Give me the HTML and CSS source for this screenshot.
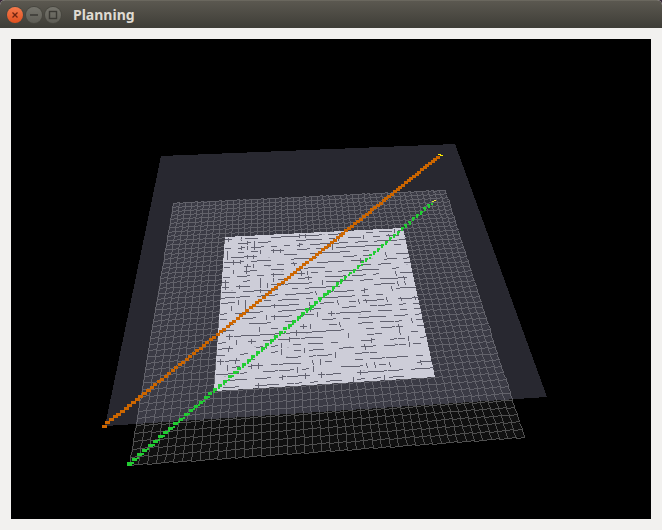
FILE: index.html
```html
<!DOCTYPE html>
<html lang="en">
<head>
<meta charset="utf-8">
<title>Planning</title>
<link rel="stylesheet" href="styles.css">
</head>
<body>
<div class="window">
  <header class="titlebar">
    <div class="controls">
      <span class="btn btn-close">
        <svg viewBox="0 0 10 10" width="10" height="10"><path d="M2.5 2.5 7.5 7.5M7.5 2.5 2.5 7.5" stroke="#6e2410" stroke-width="1.3" fill="none"/></svg>
      </span>
      <span class="btn">
        <svg viewBox="0 0 10 10" width="10" height="10"><path d="M1 5H9" stroke="#3a3934" stroke-width="1.5" fill="none"/></svg>
      </span>
      <span class="btn">
        <svg viewBox="0 0 10 10" width="10" height="10"><rect x="1.5" y="1.5" width="7" height="7" stroke="#3a3934" stroke-width="1.4" fill="none"/></svg>
      </span>
    </div>
    <h1 class="title">Planning</h1>
  </header>
  <main class="content">
    <canvas id="scene" class="scene" width="640" height="480"></canvas>
  </main>
</div>
<script src="app.js"></script>
</body>
</html>
```
FILE: styles.css
```css
* { box-sizing: border-box; }
html, body { margin: 0; height: 100%; background: #3a2a3a; }
.window {
  width: 662px;
  height: 530px;
  display: flex;
  flex-direction: column;
  background: #f2f1ef;
  border-radius: 5px 5px 0 0;
  overflow: hidden;
}
.titlebar {
  height: 28px;
  flex: none;
  display: flex;
  align-items: center;
  padding-left: 7px;
  background: linear-gradient(#5b5850, #3e3d37);
  border-top: 1px solid #6a675e;
}
.controls { display: flex; gap: 3px; align-items: center; }
.btn {
  width: 16px;
  height: 16px;
  border-radius: 50%;
  display: flex;
  align-items: center;
  justify-content: center;
  background: linear-gradient(#75746c, #5e5d56);
  box-shadow: 0 0 0 1px #47463f;
}
.btn-close { background: linear-gradient(#f47a4c, #e0501f); }
.title {
  margin: 0 0 0 12px;
  font: 700 14px/1 "Noto Sans", "Open Sans", sans-serif;
  color: #dfdbd2;
}
.content { flex: 1; padding: 11px; }
.scene { display: block; width: 640px; height: 480px; background: #000; }
```
FILE: app.js
```js
(function () {
  var ctx = document.getElementById('scene').getContext('2d');
  var OX = 11, OY = 39;
  var seed = 12345;
  function rnd() { seed = (seed * 1664525 + 1013904223) >>> 0; return seed / 4294967296; }
  function px(x, y, c, w, h) { ctx.fillStyle = c; ctx.fillRect(x - OX, y - OY, w || 1, h || 1); }

  function inside(q, x, y) {
    var pos = 0, neg = 0;
    for (var i = 0; i < 4; i++) {
      var a = q[i], b = q[(i + 1) % 4];
      var s = (b[0] - a[0]) * (y - a[1]) - (b[1] - a[1]) * (x - a[0]);
      if (s > 0) pos++; else if (s < 0) neg++;
    }
    return !(pos && neg);
  }
  function fill(q, colorAt) {
    for (var y = 39; y < 519; y++) for (var x = 11; x < 651; x++) {
      if (inside(q, x + 0.5, y + 0.5)) { var c = colorAt(x, y); if (c) px(x, y, c); }
    }
  }
  function line(x0, y0, x1, y1, colorAt) {
    x0 = Math.round(x0); y0 = Math.round(y0); x1 = Math.round(x1); y1 = Math.round(y1);
    var dx = Math.abs(x1 - x0), dy = Math.abs(y1 - y0), sx = x0 < x1 ? 1 : -1, sy = y0 < y1 ? 1 : -1, e = dx - dy;
    for (;;) {
      px(x0, y0, colorAt(x0, y0));
      if (x0 === x1 && y0 === y1) break;
      var e2 = 2 * e;
      if (e2 > -dy) { e -= dy; x0 += sx; }
      if (e2 < dx) { e += dx; y0 += sy; }
    }
  }
  function homography(q) {
    var x0 = q[0][0], y0 = q[0][1], x1 = q[1][0], y1 = q[1][1], x2 = q[2][0], y2 = q[2][1], x3 = q[3][0], y3 = q[3][1];
    var dx1 = x1 - x2, dx2 = x3 - x2, sx = x0 - x1 + x2 - x3;
    var dy1 = y1 - y2, dy2 = y3 - y2, sy = y0 - y1 + y2 - y3;
    var d = dx1 * dy2 - dx2 * dy1;
    var g = (sx * dy2 - dx2 * sy) / d, h = (dx1 * sy - sx * dy1) / d;
    var a = x1 - x0 + g * x1, b = x3 - x0 + h * x3, e = y1 - y0 + g * y1, f = y3 - y0 + h * y3;
    return function (u, v) {
      var w = g * u + h * v + 1;
      return [(a * u + b * v + x0) / w, (e * u + f * v + y0) / w];
    };
  }

  var plane = [[161, 156], [455, 144], [547, 397], [105, 426]];
  var grid = [[173, 203], [445, 190], [524, 437], [129, 465]];
  var inner = [[225, 237], [403, 228], [435, 377], [214, 391]];

  fill(plane, function () { return '#282830'; });
  fill(grid, function (x, y) { return inside(plane, x + 0.5, y + 0.5) ? '#3b3b45' : '#101010'; });

  var gridLine = function (x, y) { return inside(plane, x + 0.5, y + 0.5) ? '#63636b' : '#505050'; };
  var G = homography(grid), N = 46, i, j, a, b;
  for (i = 0; i <= N; i++) for (j = 0; j < N; j++) {
    a = G(i / N, j / N); b = G(i / N, (j + 1) / N);
    line(a[0], a[1] + 1, b[0], b[1] - 1, gridLine);
    a = G(j / N, i / N); b = G((j + 1) / N, i / N);
    line(a[0], a[1], b[0], b[1] - 0.4, gridLine);
  }

  fill(inner, function () { return '#cdcdd8'; });
  var I = homography(inner), M = 28;
  var wall = function () { return '#626270'; };
  for (i = 0; i < M; i++) for (j = 0; j < M; j++) {
    var u = i / M, v = j / M;
    var gx = Math.max(0, 0.3 - u * 0.6 - v * 0.2) + 0.1;
    if (rnd() < 0.56) {
      a = I(u + 0.1 / M, v + 0.5 / M); b = I(u + 0.95 / M, v + 0.5 / M);
      line(a[0], a[1], b[0], b[1], wall);
    }
    if (rnd() < gx) {
      a = I(u + 0.5 / M, v + 0.2 / M); b = I(u + 0.5 / M, v + 0.9 / M);
      line(a[0], a[1], b[0], b[1], wall);
    }
    if (rnd() < 0.03) {
      a = I(u + rnd() / M, v + rnd() / M);
      px(Math.round(a[0]), Math.round(a[1]), '#b0b0bc', 2, 1);
    }
  }

  function path(x0, y0, x1, y1, color, step, big, small, gapDots) {
    var len = Math.hypot(x1 - x0, y1 - y0), s = 0;
    while (s < len) {
      var t = s / len, x = x0 + (x1 - x0) * t, y = y0 + (y1 - y0) * t;
      var size = big + (small - big) * t;
      var w = Math.max(2, Math.round(size * 1.1)), h = Math.max(2, Math.round(size * 0.8));
      px(Math.round(x - w / 2), Math.round(y - h / 2), color, w, h);
      if (gapDots) {
        var m = s + step / 2;
        px(Math.round(x0 + (x1 - x0) * m / len), Math.round(y0 + (y1 - y0) * m / len), color, 2, 2);
      }
      s += step * (1 - 0.3 * t);
    }
  }
  path(104, 426, 438, 157, '#cc6600', 4.8, 4.2, 3.4, false);
  px(438, 154, '#ffee00', 3, 1); px(440, 155, '#ffee00', 3, 1);
  path(129, 464, 430, 204, '#22cc33', 7, 4.4, 2.6, true);
  px(432, 201, '#ddee33', 2, 1); px(434, 200, '#ffee33', 2, 1);
})();
```
